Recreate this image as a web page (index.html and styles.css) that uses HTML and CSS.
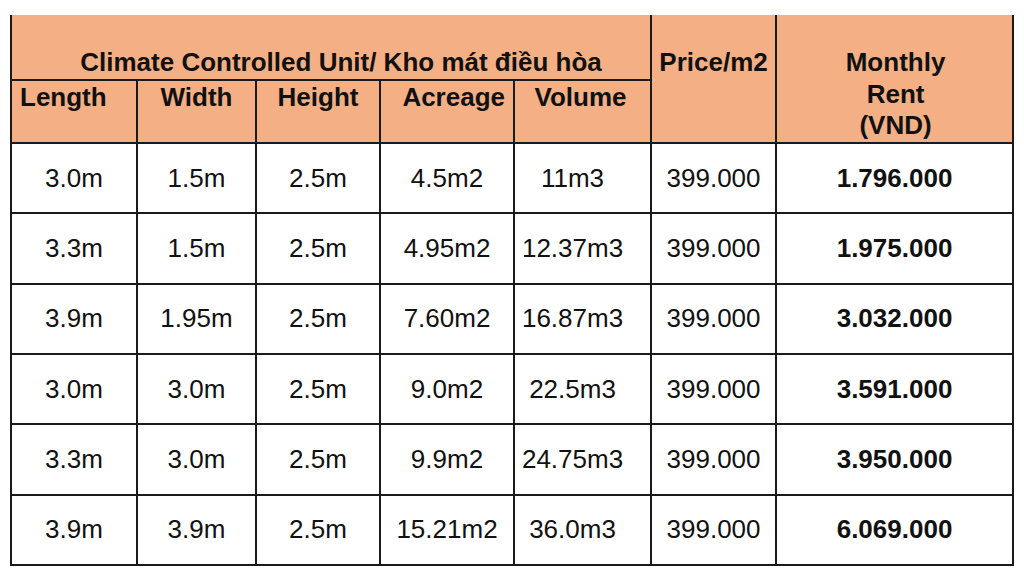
FILE: index.html
```html
<!DOCTYPE html>
<html lang="vi">
<head>
<meta charset="utf-8">
<title>Climate Controlled Unit</title>
<link rel="stylesheet" href="styles.css">
</head>
<body>
<table class="price-table">
  <colgroup>
    <col class="c-len"><col class="c-wid"><col class="c-hei"><col class="c-acr"><col class="c-vol"><col class="c-price"><col class="c-rent">
  </colgroup>
  <thead>
    <tr class="head-top">
      <th colspan="5" class="group">Climate Controlled Unit/ Kho mát điều hòa</th>
      <th rowspan="2" class="tall">Price/m2</th>
      <th rowspan="2" class="tall rent-head">Monthly<br>Rent<br>(VND)</th>
    </tr>
    <tr class="head-sub">
      <th class="h-len">Length</th>
      <th>Width</th>
      <th>Height</th>
      <th class="h-acr">Acreage</th>
      <th class="h-vol">Volume</th>
    </tr>
  </thead>
  <tbody>
    <tr><td>3.0m</td><td>1.5m</td><td>2.5m</td><td>4.5m2</td><td class="vol">11m3</td><td>399.000</td><td class="rent">1.796.000</td></tr>
    <tr><td>3.3m</td><td>1.5m</td><td>2.5m</td><td>4.95m2</td><td class="vol">12.37m3</td><td>399.000</td><td class="rent">1.975.000</td></tr>
    <tr><td>3.9m</td><td>1.95m</td><td>2.5m</td><td>7.60m2</td><td class="vol">16.87m3</td><td>399.000</td><td class="rent">3.032.000</td></tr>
    <tr><td>3.0m</td><td>3.0m</td><td>2.5m</td><td>9.0m2</td><td class="vol">22.5m3</td><td>399.000</td><td class="rent">3.591.000</td></tr>
    <tr><td>3.3m</td><td>3.0m</td><td>2.5m</td><td>9.9m2</td><td class="vol">24.75m3</td><td>399.000</td><td class="rent">3.950.000</td></tr>
    <tr><td>3.9m</td><td>3.9m</td><td>2.5m</td><td>15.21m2</td><td class="vol">36.0m3</td><td>399.000</td><td class="rent">6.069.000</td></tr>
  </tbody>
</table>
</body>
</html>
```
FILE: styles.css
```css
html, body {
  margin: 0;
  padding: 0;
  background: #ffffff;
}
body {
  font-family: "Liberation Sans", Arial, sans-serif;
  color: #111111;
}
.price-table {
  margin: 15px 0 0 10px;
  width: 1004px;
  border-collapse: collapse;
  table-layout: fixed;
  font-size: 26px;
  line-height: 33px;
}
.c-len { width: 126px; }
.c-wid { width: 119px; }
.c-hei { width: 124px; }
.c-acr { width: 134px; }
.c-vol { width: 137px; }
.c-price { width: 125px; }
.c-rent { width: 237px; }

.price-table th,
.price-table td {
  border: 2px solid #1a1a1a;
  padding: 0;
  text-align: center;
}
.price-table thead tr:first-child th {
  border-top: none;
}
.price-table th {
  background: #f4b084;
  font-weight: bold;
}
.head-top { height: 65px; }
.head-sub { height: 63px; }
.price-table th.group {
  vertical-align: bottom;
  padding-left: 20px;
}
.price-table th.tall {
  vertical-align: top;
  padding-top: 32px;
  line-height: 31.5px;
}
.price-table th.rent-head {
  padding-left: 2px;
}
.head-sub th {
  vertical-align: top;
}
.price-table .head-sub .h-len {
  text-align: left;
  padding-left: 8px;
}
.price-table .head-sub .h-acr {
  text-align: right;
  padding-right: 8px;
}
.price-table .head-sub .h-vol {
  padding-right: 4px;
}
.price-table tbody tr {
  height: 70.33px;
}
.price-table td {
  vertical-align: middle;
}
.price-table td.vol {
  padding-right: 20px;
}
.price-table td.rent {
  font-weight: bold;
}
```
